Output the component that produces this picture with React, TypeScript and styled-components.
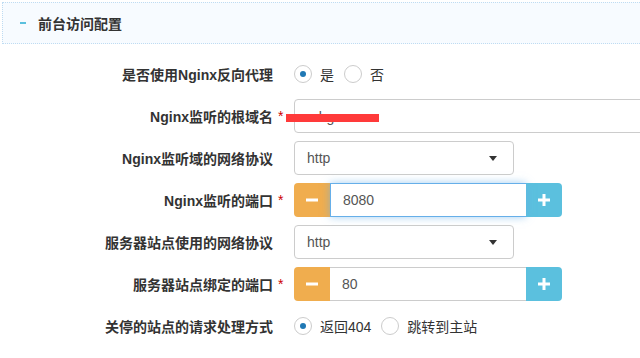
import styled, { createGlobalStyle } from 'styled-components'

const GlobalStyle = createGlobalStyle`
  body {
    margin: 0;
    background: #fff;
    color: #333;
    font-family: "Liberation Sans", "Noto Sans CJK SC", sans-serif;
    font-size: 14px;
  }
`

const Page = styled.div`
  width: 640px;
  height: 358px;
  overflow: hidden;
`

const PanelHeader = styled.div`
  margin: 2px 0 0 2px;
  height: 40px;
  border: 1px dotted #bfdcf2;
  border-right: none;
  background: #f7fbff;
  display: flex;
  align-items: center;
  padding-left: 17px;
`

const Dash = styled.span`
  width: 6px;
  height: 2px;
  background: #5bc0de;
  margin-right: 12px;
`

const Title = styled.span`
  font-size: 14px;
  font-weight: bold;
  color: #333;
`

const Form = styled.div`
  padding-top: 13px;
`

const Row = styled.div`
  position: relative;
  display: grid;
  grid-template-columns: 273px 21px 1fr;
  align-items: center;
  height: 34px;
  margin-bottom: 8px;
`

const Label = styled.div`
  text-align: right;
  font-weight: bold;
  font-size: 14px;
  color: #333;
  white-space: nowrap;
`

const Star = styled.span`
  color: #c00;
  padding-left: 5px;
  font-size: 14px;
`

const Options = styled.div`
  display: flex;
  align-items: center;
`

const Option = styled.label`
  display: flex;
  align-items: center;
  margin-right: 10px;
  color: #333;
`

const RadioMark = styled.span<{ $checked?: boolean }>`
  width: 18px;
  height: 18px;
  box-sizing: border-box;
  border: 1px solid #ccc;
  border-radius: 50%;
  background: #fff;
  margin-right: 8px;
  display: flex;
  align-items: center;
  justify-content: center;
  &::after {
    content: '';
    width: 6px;
    height: 6px;
    border-radius: 50%;
    background: ${(p) => (p.$checked ? '#1f78b4' : 'transparent')};
  }
`

const TextBox = styled.div<{ $width?: string }>`
  box-sizing: border-box;
  width: ${(p) => p.$width || 'auto'};
  height: 34px;
  border: 1px solid #ccc;
  border-radius: 4px;
  padding: 0 12px;
  display: flex;
  align-items: center;
  justify-content: space-between;
  color: #555;
  background: #fff;
  white-space: nowrap;
  overflow: hidden;
`

const FullBox = styled(TextBox)`
  width: 360px;
  padding-top: 2px;
`

const Caret = styled.span`
  width: 0;
  height: 0;
  border-left: 4px solid transparent;
  border-right: 4px solid transparent;
  border-top: 5px solid #333;
  margin-right: 4px;
`

const Spinner = styled.div`
  display: flex;
  width: 268px;
  height: 34px;
`

const SpinButton = styled.div<{ $kind: 'minus' | 'plus' }>`
  width: 36px;
  flex: none;
  background: ${(p) => (p.$kind === 'minus' ? '#f0ad4e' : '#5bc0de')};
  border-radius: ${(p) => (p.$kind === 'minus' ? '4px 0 0 4px' : '0 4px 4px 0')};
  display: flex;
  align-items: center;
  justify-content: center;
`

const SpinInput = styled.div<{ $focus?: boolean }>`
  flex: 1;
  box-sizing: border-box;
  border: 1px solid ${(p) => (p.$focus ? '#66afe9' : '#ccc')};
  box-shadow: ${(p) => (p.$focus ? '0 0 8px rgba(102,175,233,.6)' : 'none')};
  border-left: ${(p) => (p.$focus ? '1px solid #66afe9' : 'none')};
  border-right: none;
  padding: 0 12px;
  display: flex;
  align-items: center;
  color: #555;
  background: #fff;
  position: relative;
  z-index: 1;
`

const Redact = styled.span`
  position: absolute;
  left: 286px;
  top: 15px;
  width: 93px;
  height: 8px;
  background: #ff3a3a;
`

const Minus = () => (
  <svg width="12" height="4" viewBox="0 0 12 4">
    <rect x="0" y="0.5" width="12" height="3" fill="#fff" />
  </svg>
)

const Plus = () => (
  <svg width="12" height="12" viewBox="0 0 12 12">
    <rect x="0" y="4.5" width="12" height="3" fill="#fff" />
    <rect x="4.5" y="0" width="3" height="12" fill="#fff" />
  </svg>
)

const App = () => {
  return (
    <Page>
      <GlobalStyle />
      <PanelHeader>
        <Dash />
        <Title>前台访问配置</Title>
      </PanelHeader>
      <Form>
        <Row>
          <Label>是否使用Nginx反向代理</Label>
          <span />
          <Options>
            <Option><RadioMark $checked />是</Option>
            <Option><RadioMark />否</Option>
          </Options>
        </Row>
        <Row>
          <Label>Nginx监听的根域名</Label>
          <Star>*</Star>
          <FullBox>a.hg</FullBox>
          <Redact />
        </Row>
        <Row>
          <Label>Nginx监听域的网络协议</Label>
          <span />
          <TextBox $width="220px">http<Caret /></TextBox>
        </Row>
        <Row>
          <Label>Nginx监听的端口</Label>
          <Star>*</Star>
          <Spinner>
            <SpinButton $kind="minus"><Minus /></SpinButton>
            <SpinInput $focus>8080</SpinInput>
            <SpinButton $kind="plus"><Plus /></SpinButton>
          </Spinner>
        </Row>
        <Row>
          <Label>服务器站点使用的网络协议</Label>
          <span />
          <TextBox $width="220px">http<Caret /></TextBox>
        </Row>
        <Row>
          <Label>服务器站点绑定的端口</Label>
          <Star>*</Star>
          <Spinner>
            <SpinButton $kind="minus"><Minus /></SpinButton>
            <SpinInput>80</SpinInput>
            <SpinButton $kind="plus"><Plus /></SpinButton>
          </Spinner>
        </Row>
        <Row>
          <Label>关停的站点的请求处理方式</Label>
          <span />
          <Options>
            <Option><RadioMark $checked />返回404</Option>
            <Option><RadioMark />跳转到主站</Option>
          </Options>
        </Row>
      </Form>
    </Page>
  )
}

export default App
